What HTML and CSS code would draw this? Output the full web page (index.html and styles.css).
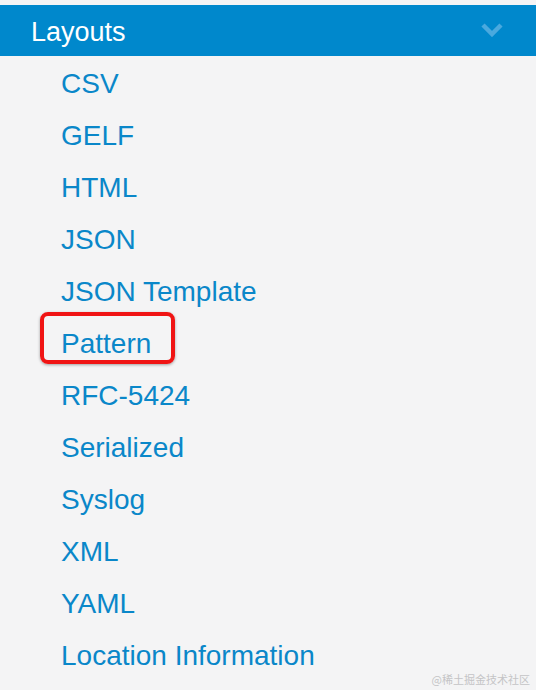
FILE: index.html
```html
<!DOCTYPE html>
<html>
<head>
<meta charset="utf-8">
<link rel="stylesheet" href="styles.css">
</head>
<body>
<div class="panel">
  <div class="header">
    <span class="title">Layouts</span>
    <svg class="chev" width="22" height="14" viewBox="0 0 22 14"><path d="M2 2 L11 11 L20 2" fill="none" stroke="#4aa9de" stroke-width="4.5" stroke-linejoin="miter"/></svg>
  </div>
  <ul class="list">
    <li><a>CSV</a></li>
    <li><a>GELF</a></li>
    <li><a>HTML</a></li>
    <li><a>JSON</a></li>
    <li><a>JSON Template</a></li>
    <li><a class="hl">Pattern</a></li>
    <li><a>RFC-5424</a></li>
    <li><a>Serialized</a></li>
    <li><a>Syslog</a></li>
    <li><a>XML</a></li>
    <li><a>YAML</a></li>
    <li><a>Location Information</a></li>
  </ul>
  <div class="wm">@稀土掘金技术社区</div>
</div>
</body>
</html>
```

FILE: styles.css
```css
html, body {
  margin: 0;
  padding: 0;
}
body {
  background: #f4f4f5;
  font-family: "Liberation Sans", Arial, sans-serif;
  width: 536px;
  height: 690px;
  overflow: hidden;
}
.panel {
  position: relative;
  height: 690px;
  padding-top: 5px;
  box-sizing: border-box;
}
.header {
  height: 51px;
  background: #0088cc;
  display: flex;
  align-items: center;
  justify-content: space-between;
  padding: 0 33px 0 31px;
}
.title {
  color: #ffffff;
  font-size: 27px;
  line-height: 1;
  margin-top: 3px;
}
.chev {
  display: block;
  margin-top: -2px;
}
.list {
  list-style: none;
  margin: 0;
  padding: 2px 0 0 61px;
}
.list li {
  height: 52px;
  line-height: 52px;
  font-size: 28px;
}
.list a {
  color: #0a87c9;
  display: inline-block;
  position: relative;
}
.hl::after {
  content: "";
  position: absolute;
  top: -6px;
  bottom: 6px;
  left: -21px;
  right: -24px;
  border: 4px solid #f01414;
  border-radius: 8px;
  box-shadow: 0 1px 3px rgba(0,0,0,0.35);
}
.wm {
  position: absolute;
  right: 6px;
  bottom: 3px;
  font-family: "Noto Sans CJK SC", sans-serif;
  font-size: 11px;
  color: #c4c4c6;
}
```
